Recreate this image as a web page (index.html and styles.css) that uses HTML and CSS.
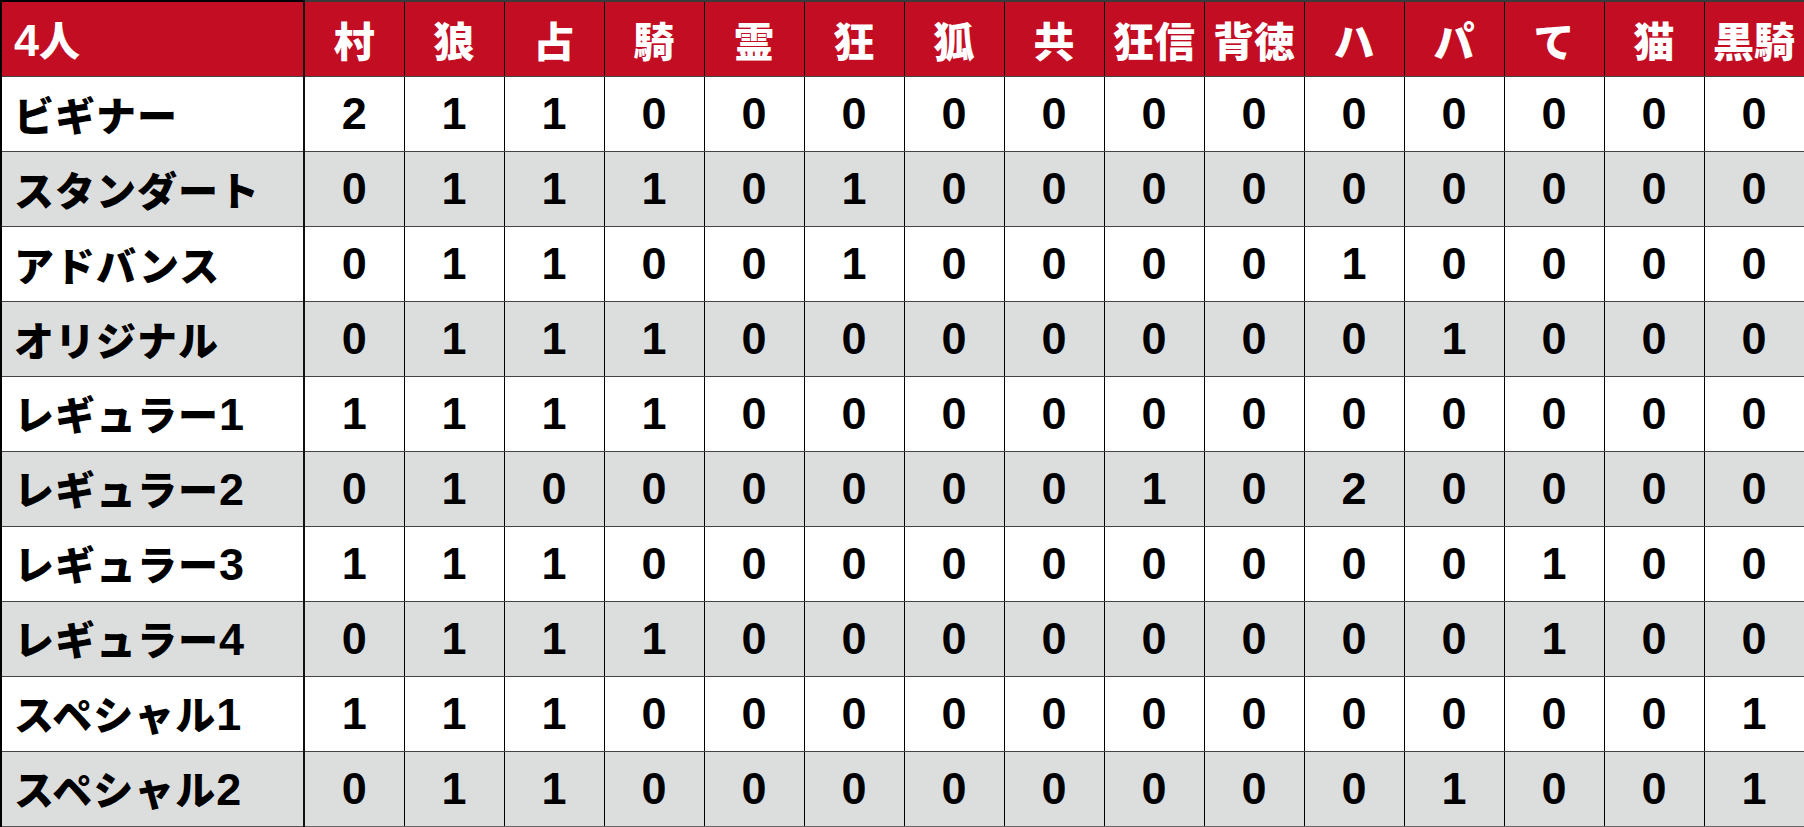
FILE: index.html
```html
<!DOCTYPE html>
<html lang="ja">
<head>
<meta charset="utf-8">
<title>4人</title>
<link rel="stylesheet" href="styles.css">
</head>
<body>
<table class="roles">
  <colgroup>
    <col class="col-name">
    <col span="15" class="col-role">
  </colgroup>
  <thead>
    <tr class="head">
      <th class="name"><span class="num">4</span>人</th>
      <th>村</th><th>狼</th><th>占</th><th>騎</th><th>霊</th><th>狂</th><th>狐</th><th>共</th><th>狂信</th><th>背徳</th><th>ハ</th><th>パ</th><th>て</th><th>猫</th><th>黒騎</th>
    </tr>
  </thead>
  <tbody>
    <tr><th class="name">ビギナー</th><td>2</td><td>1</td><td>1</td><td>0</td><td>0</td><td>0</td><td>0</td><td>0</td><td>0</td><td>0</td><td>0</td><td>0</td><td>0</td><td>0</td><td>0</td></tr>
    <tr class="alt"><th class="name">スタンダート</th><td>0</td><td>1</td><td>1</td><td>1</td><td>0</td><td>1</td><td>0</td><td>0</td><td>0</td><td>0</td><td>0</td><td>0</td><td>0</td><td>0</td><td>0</td></tr>
    <tr><th class="name">アドバンス</th><td>0</td><td>1</td><td>1</td><td>0</td><td>0</td><td>1</td><td>0</td><td>0</td><td>0</td><td>0</td><td>1</td><td>0</td><td>0</td><td>0</td><td>0</td></tr>
    <tr class="alt"><th class="name">オリジナル</th><td>0</td><td>1</td><td>1</td><td>1</td><td>0</td><td>0</td><td>0</td><td>0</td><td>0</td><td>0</td><td>0</td><td>1</td><td>0</td><td>0</td><td>0</td></tr>
    <tr><th class="name">レギュラー<span class="num">1</span></th><td>1</td><td>1</td><td>1</td><td>1</td><td>0</td><td>0</td><td>0</td><td>0</td><td>0</td><td>0</td><td>0</td><td>0</td><td>0</td><td>0</td><td>0</td></tr>
    <tr class="alt"><th class="name">レギュラー<span class="num">2</span></th><td>0</td><td>1</td><td>0</td><td>0</td><td>0</td><td>0</td><td>0</td><td>0</td><td>1</td><td>0</td><td>2</td><td>0</td><td>0</td><td>0</td><td>0</td></tr>
    <tr><th class="name">レギュラー<span class="num">3</span></th><td>1</td><td>1</td><td>1</td><td>0</td><td>0</td><td>0</td><td>0</td><td>0</td><td>0</td><td>0</td><td>0</td><td>0</td><td>1</td><td>0</td><td>0</td></tr>
    <tr class="alt"><th class="name">レギュラー<span class="num">4</span></th><td>0</td><td>1</td><td>1</td><td>1</td><td>0</td><td>0</td><td>0</td><td>0</td><td>0</td><td>0</td><td>0</td><td>0</td><td>1</td><td>0</td><td>0</td></tr>
    <tr><th class="name">スペシャル<span class="num">1</span></th><td>1</td><td>1</td><td>1</td><td>0</td><td>0</td><td>0</td><td>0</td><td>0</td><td>0</td><td>0</td><td>0</td><td>0</td><td>0</td><td>0</td><td>1</td></tr>
    <tr class="alt"><th class="name">スペシャル<span class="num">2</span></th><td>0</td><td>1</td><td>1</td><td>0</td><td>0</td><td>0</td><td>0</td><td>0</td><td>0</td><td>0</td><td>0</td><td>1</td><td>0</td><td>0</td><td>1</td></tr>
  </tbody>
</table>
</body>
</html>
```
FILE: styles.css
```css
html, body {
  margin: 0;
  padding: 0;
  background: #ffffff;
}

.roles {
  border-collapse: collapse;
  table-layout: fixed;
  width: 1804px;
  color: #000;
}

.col-name { width: 303px; }
.col-role { width: 100px; }

.roles th,
.roles td {
  height: 74px;
  padding: 0;
  border-left: 1px solid #000;
  border-right: 1px solid #000;
  border-top: 1px solid #444;
  border-bottom: 1px solid #444;
  text-align: center;
  vertical-align: middle;
  line-height: 30px;
  white-space: nowrap;
  overflow: hidden;
}

.roles th {
  font-family: "Noto Sans CJK JP", sans-serif;
  font-weight: 900;
  font-size: 41px;
}

.roles td {
  font-family: "Liberation Sans", sans-serif;
  font-weight: 700;
  font-size: 45px;
}

.roles .num {
  font-family: "Liberation Sans", sans-serif;
  font-weight: 700;
  font-size: 45px;
  letter-spacing: 0;
}

.roles .name {
  text-align: left;
  padding-left: 12px;
  letter-spacing: 1px;
  border-left: 2px solid #000;
  border-right: 2px solid #111;
}

.roles tbody .name {
  font-size: 40px;
}

.roles .head th {
  background: #c30d23;
  color: #ffffff;
  border-top: 2px solid #3a3a3a;
}

.roles .head th.name {
  border-top: 2px solid #000;
}

.roles tbody tr.alt th,
.roles tbody tr.alt td {
  background: #dcdddd;
}

.roles tbody tr:last-child th,
.roles tbody tr:last-child td {
  border-bottom: 1px solid #555;
}

.roles tbody tr:last-child td {
  border-bottom-color: #666;
}
```
